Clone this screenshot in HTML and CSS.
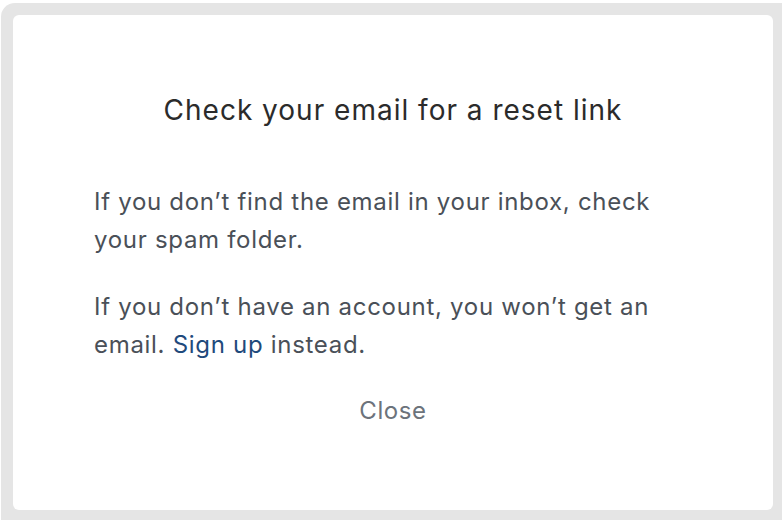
FILE: index.html
```html
<!DOCTYPE html>
<html lang="en">
<head>
<meta charset="utf-8">
<title>Check your email</title>
<link rel="stylesheet" href="styles.css">
</head>
<body>
<div class="frame">
  <div class="card">
    <h1 class="title">Check your email for a reset link</h1>
    <div class="body">
      <p class="para">If you don’t find the email in your inbox, check your spam folder.</p>
      <p class="para">If you don’t have an account, you won’t get an email. <a class="link" href="#">Sign up</a> instead.</p>
    </div>
    <div class="actions">
      <button class="close" type="button">Close</button>
    </div>
  </div>
</div>
</body>
</html>
```
FILE: styles.css
```css
html, body {
  margin: 0;
  padding: 0;
  background: #ffffff;
  overflow: hidden;
  width: 782px;
  height: 520px;
}
.frame {
  margin: 3px 0 0 1px;
  width: 800px;
  height: 540px;
  background: #e5e5e5;
  border-radius: 14px 0 0 0;
  padding: 12px 0 0 12px;
  box-sizing: border-box;
}
.card {
  width: 760px;
  height: 495px;
  background: #ffffff;
  border-radius: 6px;
  box-sizing: border-box;
  padding: 78px 81px 0 81px;
  display: flex;
  flex-direction: column;
}
.title {
  margin: 0;
  font-family: Inter, "Liberation Sans", sans-serif;
  font-weight: 400;
  font-size: 28px;
  letter-spacing: 1px;
  line-height: 34px;
  color: #2b2b2b;
  text-align: center;
}
.body {
  margin-top: 56px;
  display: flex;
  flex-direction: column;
  gap: 29px;
}
.para {
  margin: 0;
  font-family: Inter, "Noto Sans", sans-serif;
  font-size: 24px;
  letter-spacing: 0.7px;
  line-height: 38px;
  color: #4a5058;
}
.link {
  color: #1f4a7c;
  text-decoration: none;
}
.actions {
  margin-top: 28px;
  display: flex;
  justify-content: center;
}
.close {
  border: none;
  background: none;
  padding: 0;
  font-family: Inter, "Noto Sans", sans-serif;
  font-size: 24px;
  letter-spacing: 0.6px;
  line-height: 38px;
  color: #6c737b;
  cursor: pointer;
}
```
